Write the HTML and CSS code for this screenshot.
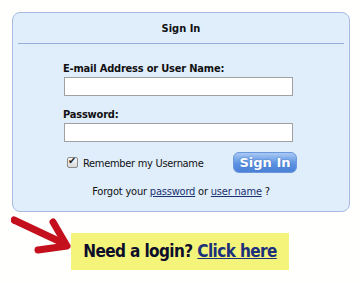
FILE: index.html
```html
<!DOCTYPE html>
<html lang="en">
<head>
  <meta charset="UTF-8">
  <meta name="viewport" content="width=device-width, initial-scale=1.0">
  <title>Sign In</title>
  <link rel="stylesheet" href="styles.css">
</head>
<body>

  <div class="login-box">
    <p class="login-title">Sign In</p>

    <div class="login-form">
      <label class="field-label" for="user">E-mail Address or User Name:</label>
      <input type="text" id="user" class="text-input">

      <label class="field-label password-label" for="pass">Password:</label>
      <input type="password" id="pass" class="text-input">

      <div class="remember-row">
        <label class="remember"><input type="checkbox" class="remember-check" checked> Remember my Username</label>
        <button class="sign-in-button">Sign In</button>
      </div>
    </div>

    <p class="forgot">Forgot your <a href="#">password</a> or <a href="#">user name</a> ?</p>
  </div>

  <div class="need-login">
    <svg class="arrow" width="60" height="40" viewBox="0 0 60 40">
      <path d="M3 5 L54 29" stroke="#c4101c" stroke-width="7" stroke-linecap="round" fill="none"/>
      <path d="M42 7 L56 31 L27 35" stroke="#c4101c" stroke-width="7" stroke-linecap="round" stroke-linejoin="round" fill="none"/>
    </svg>
    <p class="need-login-text">Need a login? <a href="#">Click here</a></p>
  </div>

</body>
</html>
```

FILE: styles.css
```css
body {
  margin: 0;
  background-color: #fffffd;
  font-family: Tahoma, "DejaVu Sans Condensed", "DejaVu Sans", sans-serif;
  color: #111;
}

.login-box {
  margin: 12px 0 0 12px;
  width: 336px;
  height: 198px;
  background-color: #e0eefc;
  border: 1px solid #a9b9e3;
  border-radius: 8px;
}

.login-title {
  margin: 0 5px;
  height: 30px;
  line-height: 31px;
  text-align: center;
  font-size: 11px;
  font-weight: bold;
  border-bottom: 1px solid #9aaedb;
}

.login-form {
  display: flex;
  flex-direction: column;
  align-items: flex-start;
  padding: 18px 0 0 50px;
}

.field-label {
  font-size: 11px;
  font-weight: bold;
  line-height: 13px;
  letter-spacing: -0.2px;
}

.password-label {
  margin-top: 12px;
}

.text-input {
  box-sizing: border-box;
  width: 229px;
  height: 19px;
  margin: 2px 0 0 1px;
  border: 1px solid #a0a0a0;
  background-color: white;
}

.remember-row {
  display: flex;
  align-items: center;
  margin-top: 10px;
  padding-left: 4px;
}

.remember {
  display: flex;
  align-items: center;
  font-size: 11px;
  letter-spacing: -0.3px;
  width: 166px;
  padding-top: 2px;
}

.remember-check {
  appearance: none;
  position: relative;
  box-sizing: border-box;
  width: 11px;
  height: 11px;
  margin: -2px 5px 0 0;
  border: 1px solid #8c8c8c;
  border-radius: 2px;
  background: linear-gradient(#fafafa, #d8d8d8);
}

.remember-check:checked::after {
  content: "\2714";
  position: absolute;
  left: 0;
  top: -3px;
  font-family: "DejaVu Sans", sans-serif;
  font-size: 10px;
  color: #222;
}

.sign-in-button {
  width: 64px;
  height: 21px;
  padding: 0;
  border: 1px solid #6b98da;
  border-radius: 6px;
  background: linear-gradient(#a9c9f4, #5d93e2 55%, #4a80d6);
  color: white;
  font-family: Tahoma, "DejaVu Sans", sans-serif;
  font-size: 13px;
  font-weight: bold;
  text-shadow: 0 0 2px #3c6cbf;
  cursor: pointer;
}

.forgot {
  margin: 12px 0 0;
  text-align: center;
  font-size: 11px;
  letter-spacing: -0.2px;
}

.forgot a {
  color: #1a3270;
}

.need-login {
  display: flex;
  align-items: flex-start;
  margin: 3px 0 0 11px;
}

.arrow {
  display: block;
}

.need-login-text {
  margin: 18px 0 0;
  width: 218px;
  height: 37px;
  line-height: 37px;
  white-space: nowrap;
  text-align: center;
  background-color: #f4f47a;
  font-size: 17px;
  font-weight: bold;
  letter-spacing: -0.6px;
  color: #0d0d2a;
}

.need-login-text a {
  color: #1b2f7a;
}
```
